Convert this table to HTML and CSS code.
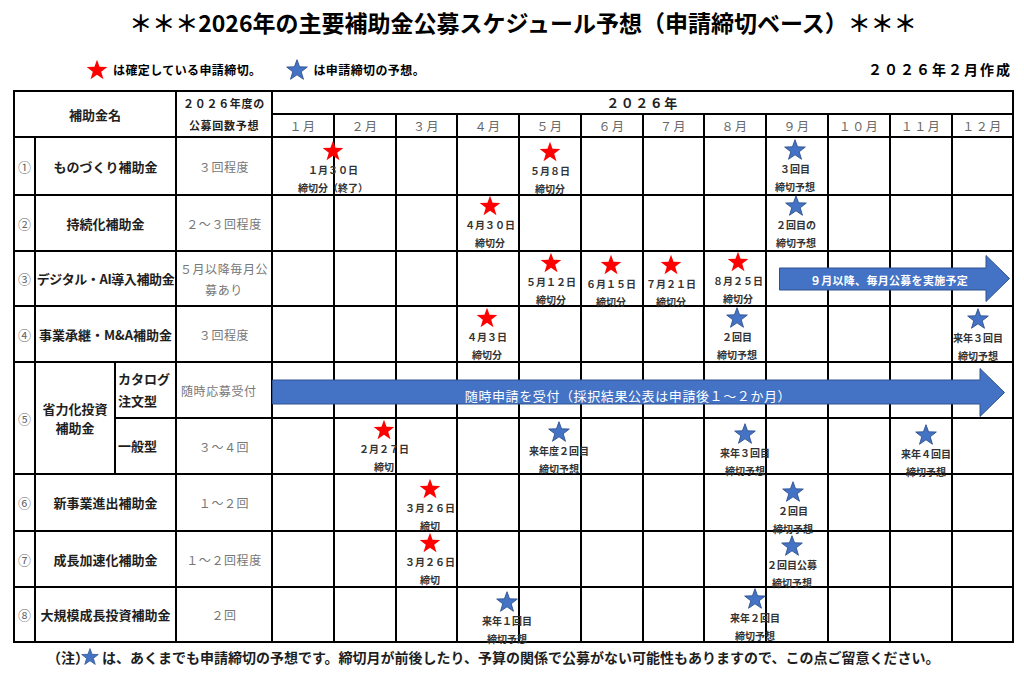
FILE: index.html
```html
<!DOCTYPE html>
<html lang="ja">
<head>
<meta charset="utf-8">
<title>2026年の主要補助金公募スケジュール予想</title>
<link rel="stylesheet" href="styles.css">
</head>
<body>
<svg class="defs" aria-hidden="true"><symbol id="star" viewBox="0 0 24 23"><polygon points="12,0.8 14.8,8.6 23.3,8.8 16.6,14 19.1,22.2 12,17.3 4.9,22.2 7.4,14 0.7,8.8 9.2,8.6"/></symbol></svg>

<h1 class="title">＊＊＊2026年の主要補助金公募スケジュール予想（申請締切ベース）＊＊＊</h1>

<div class="legend">
  <svg class="lst red" viewBox="0 0 24 23"><use href="#star"/></svg>
  <span class="ltext">は確定している申請締切。</span>
  <svg class="lst blue second" viewBox="0 0 24 23"><use href="#star"/></svg>
  <span class="ltext">は申請締切の予想。</span>
  <span class="made">２０２６年２月作成</span>
</div>

<div class="board">
  <div class="table">
    <div class="c hname">補助金名</div>
    <div class="c hcount">２０２６年度の<br>公募回数予想</div>
    <div class="c hyear">２０２６年</div>
    <div class="c mon">１月</div><div class="c mon">２月</div><div class="c mon">３月</div><div class="c mon">４月</div><div class="c mon">５月</div><div class="c mon">６月</div><div class="c mon">７月</div><div class="c mon">８月</div><div class="c mon">９月</div><div class="c mon">１０月</div><div class="c mon">１１月</div><div class="c mon">１２月</div>

    <div class="c num">①</div><div class="c name">ものづくり補助金</div><div class="c cnt">３回程度</div>
    <div class="c"></div><div class="c"></div><div class="c"></div><div class="c"></div><div class="c"></div><div class="c"></div><div class="c"></div><div class="c"></div><div class="c"></div><div class="c"></div><div class="c"></div><div class="c"></div>

    <div class="c num">②</div><div class="c name">持続化補助金</div><div class="c cnt">２～３回程度</div>
    <div class="c"></div><div class="c"></div><div class="c"></div><div class="c"></div><div class="c"></div><div class="c"></div><div class="c"></div><div class="c"></div><div class="c"></div><div class="c"></div><div class="c"></div><div class="c"></div>

    <div class="c num">③</div><div class="c name tight">デジタル・AI導入補助金</div><div class="c cnt two">５月以降毎月公<br>募あり</div>
    <div class="c"></div><div class="c"></div><div class="c"></div><div class="c"></div><div class="c"></div><div class="c"></div><div class="c"></div><div class="c"></div><div class="c"></div><div class="c"></div><div class="c"></div><div class="c"></div>

    <div class="c num">④</div><div class="c name">事業承継・M&amp;A補助金</div><div class="c cnt">３回程度</div>
    <div class="c"></div><div class="c"></div><div class="c"></div><div class="c"></div><div class="c"></div><div class="c"></div><div class="c"></div><div class="c"></div><div class="c"></div><div class="c"></div><div class="c"></div><div class="c"></div>

    <div class="c num span2">⑤</div><div class="c name grp span2">省力化投資<br>補助金</div><div class="c sub">カタログ<br>注文型</div><div class="c cnt left">随時応募受付</div>
    <div class="c"></div><div class="c"></div><div class="c"></div><div class="c"></div><div class="c"></div><div class="c"></div><div class="c"></div><div class="c"></div><div class="c"></div><div class="c"></div><div class="c"></div><div class="c"></div>
    <div class="c sub">一般型</div><div class="c cnt">３～４回</div>
    <div class="c"></div><div class="c"></div><div class="c"></div><div class="c"></div><div class="c"></div><div class="c"></div><div class="c"></div><div class="c"></div><div class="c"></div><div class="c"></div><div class="c"></div><div class="c"></div>

    <div class="c num">⑥</div><div class="c name">新事業進出補助金</div><div class="c cnt">１～２回</div>
    <div class="c"></div><div class="c"></div><div class="c"></div><div class="c"></div><div class="c"></div><div class="c"></div><div class="c"></div><div class="c"></div><div class="c"></div><div class="c"></div><div class="c"></div><div class="c"></div>

    <div class="c num">⑦</div><div class="c name">成長加速化補助金</div><div class="c cnt">１～２回程度</div>
    <div class="c"></div><div class="c"></div><div class="c"></div><div class="c"></div><div class="c"></div><div class="c"></div><div class="c"></div><div class="c"></div><div class="c"></div><div class="c"></div><div class="c"></div><div class="c"></div>

    <div class="c num">⑧</div><div class="c name">大規模成長投資補助金</div><div class="c cnt">２回</div>
    <div class="c"></div><div class="c"></div><div class="c"></div><div class="c"></div><div class="c"></div><div class="c"></div><div class="c"></div><div class="c"></div><div class="c"></div><div class="c"></div><div class="c"></div><div class="c"></div>
  </div>

  <div class="arrow a1">
    <svg class="ashape" viewBox="0 0 231 47"><polygon points="0.5,13 207,13 207,0.5 230.5,23.5 207,46.5 207,35 0.5,35"/></svg>
    <span class="atext">９月以降、毎月公募を実施予定</span>
  </div>
  <div class="arrow a2">
    <svg class="ashape" viewBox="0 0 733 49"><polygon points="0.5,12 708,12 708,0.5 732.5,24.5 708,48.5 708,36 0.5,36"/></svg>
    <span class="atext">随時申請を受付（採択結果公表は申請後１～２か月）</span>
  </div>

  <div class="mk" style="left:320px;top:50px"><svg class="st red" viewBox="0 0 24 23"><use href="#star"/></svg><span>１月３０日</span><span>締切分（終了）</span></div>
  <div class="mk" style="left:537px;top:51px"><svg class="st red" viewBox="0 0 24 23"><use href="#star"/></svg><span>５月８日</span><span>締切分</span></div>
  <div class="mk" style="left:782px;top:49px"><svg class="st blue" viewBox="0 0 24 23"><use href="#star"/></svg><span>３回目</span><span>締切予想</span></div>

  <div class="mk" style="left:477px;top:105px"><svg class="st red" viewBox="0 0 24 23"><use href="#star"/></svg><span>４月３０日</span><span>締切分</span></div>
  <div class="mk" style="left:783px;top:105px"><svg class="st blue" viewBox="0 0 24 23"><use href="#star"/></svg><span>２回目の</span><span>締切予想</span></div>

  <div class="mk" style="left:538px;top:162px"><svg class="st red" viewBox="0 0 24 23"><use href="#star"/></svg><span>５月１２日</span><span>締切分</span></div>
  <div class="mk" style="left:598px;top:164px"><svg class="st red" viewBox="0 0 24 23"><use href="#star"/></svg><span>６月１５日</span><span>締切分</span></div>
  <div class="mk" style="left:658px;top:164px"><svg class="st red" viewBox="0 0 24 23"><use href="#star"/></svg><span>７月２１日</span><span>締切分</span></div>
  <div class="mk" style="left:725px;top:161px"><svg class="st red" viewBox="0 0 24 23"><use href="#star"/></svg><span>８月２５日</span><span>締切分</span></div>

  <div class="mk" style="left:474px;top:217px"><svg class="st red" viewBox="0 0 24 23"><use href="#star"/></svg><span>４月３日</span><span>締切分</span></div>
  <div class="mk" style="left:724px;top:217px"><svg class="st blue" viewBox="0 0 24 23"><use href="#star"/></svg><span>２回目</span><span>締切予想</span></div>
  <div class="mk" style="left:965px;top:218px"><svg class="st blue" viewBox="0 0 24 23"><use href="#star"/></svg><span>来年３回目</span><span>締切予想</span></div>

  <div class="mk" style="left:371px;top:329px"><svg class="st red" viewBox="0 0 24 23"><use href="#star"/></svg><span>２月２７日</span><span>締切</span></div>
  <div class="mk" style="left:546px;top:331px"><svg class="st blue" viewBox="0 0 24 23"><use href="#star"/></svg><span>来年度２回目</span><span>締切予想</span></div>
  <div class="mk" style="left:732px;top:333px"><svg class="st blue" viewBox="0 0 24 23"><use href="#star"/></svg><span>来年３回目</span><span>締切予想</span></div>
  <div class="mk" style="left:913px;top:334px"><svg class="st blue" viewBox="0 0 24 23"><use href="#star"/></svg><span>来年４回目</span><span>締切予想</span></div>

  <div class="mk" style="left:417px;top:388px"><svg class="st red" viewBox="0 0 24 23"><use href="#star"/></svg><span>３月２６日</span><span>締切</span></div>
  <div class="mk" style="left:780px;top:391px"><svg class="st blue" viewBox="0 0 24 23"><use href="#star"/></svg><span>２回目</span><span>締切予想</span></div>

  <div class="mk" style="left:417px;top:442px"><svg class="st red" viewBox="0 0 24 23"><use href="#star"/></svg><span>３月２６日</span><span>締切</span></div>
  <div class="mk" style="left:779px;top:445px"><svg class="st blue" viewBox="0 0 24 23"><use href="#star"/></svg><span>２回目公募</span><span>締切予想</span></div>

  <div class="mk" style="left:494px;top:501px"><svg class="st blue" viewBox="0 0 24 23"><use href="#star"/></svg><span>来年１回目</span><span>締切予想</span></div>
  <div class="mk" style="left:742px;top:498px"><svg class="st blue" viewBox="0 0 24 23"><use href="#star"/></svg><span>来年２回目</span><span>締切予想</span></div>
</div>

<p class="note">（注）<svg class="nst blue" viewBox="0 0 24 23"><use href="#star"/></svg>は、あくまでも申請締切の予想です。締切月が前後したり、予算の関係で公募がない可能性もありますので、この点ご留意ください。</p>
</body>
</html>
```

FILE: styles.css
```css
html, body {
  margin: 0;
  padding: 0;
  background: #fff;
}
body {
  width: 1024px;
  font-family: "Noto Sans CJK JP", "Noto Sans", sans-serif;
  color: #000;
}
.defs {
  position: absolute;
  width: 0;
  height: 0;
  overflow: hidden;
}
.red { fill: #ff0000; }
.blue { fill: #4472c4; stroke: #2f528f; stroke-width: 1; }

.title {
  margin: 7px 0 0;
  padding-left: 22px;
  height: 30px;
  line-height: 30px;
  font-size: 23px;
  font-weight: 700;
  text-align: center;
  white-space: nowrap;
}

.legend {
  display: flex;
  align-items: center;
  height: 22px;
  margin-top: 21px;
  padding: 0 12px 0 86px;
  font-size: 12px;
  font-weight: 700;
  white-space: nowrap;
}
.lst { width: 22px; height: 21px; flex: none; }
.ltext { margin-left: 5px; letter-spacing: 0.4px; }
.lst.second { margin-left: 25px; }
.made {
  margin-left: auto;
  font-size: 14px;
  letter-spacing: 2px;
}

.board {
  position: relative;
  margin: 10px 0 0 13px;
  width: 1001px;
}
.table {
  display: grid;
  grid-template-columns: 19px 78px 59px 94px 60px 60px 59px 60px 60px 60px 59px 60px 60px 60px 60px 59px;
  grid-template-rows: 21px 21px 56px 54px 53px 54px 54px 54px 55px 54px 53px;
  gap: 2px;
  padding: 2px;
  background: #000;
}
.c {
  background: #fff;
  display: flex;
  align-items: center;
  justify-content: center;
  text-align: center;
  white-space: nowrap;
}
.hname {
  grid-column: 1 / span 3;
  grid-row: 1 / span 2;
  font-size: 13px;
  font-weight: 700;
  color: #222;
}
.hcount {
  grid-column: 4;
  grid-row: 1 / span 2;
  font-size: 11px;
  font-weight: 700;
  line-height: 22px;
  letter-spacing: 0.7px;
  color: #222;
}
.hyear {
  grid-column: 5 / span 12;
  font-size: 13px;
  font-weight: 700;
  letter-spacing: 1.5px;
  color: #222;
}
.mon {
  font-size: 12px;
  color: #666;
  letter-spacing: 1.5px;
}
.num {
  font-size: 13px;
  color: #666;
}
.name {
  grid-column: span 2;
  font-size: 13px;
  font-weight: 700;
  color: #1e1e1e;
}
.name.tight { letter-spacing: -0.4px; }
.name.grp {
  grid-column: span 1;
  line-height: 19px;
}
.span2 { grid-row: span 2; }
.sub {
  justify-content: flex-start;
  text-align: left;
  padding-left: 2px;
  font-size: 13px;
  font-weight: 700;
  line-height: 22px;
  color: #1e1e1e;
}
.cnt {
  font-size: 12px;
  color: #777;
  letter-spacing: 0.6px;
}
.cnt.two { line-height: 21px; }
.cnt.left {
  justify-content: flex-start;
  padding-left: 4px;
}

.arrow {
  position: absolute;
  display: flex;
  align-items: center;
}
.a1 { left: 766px; top: 165px; width: 231px; height: 47px; }
.a2 { left: 259px; top: 278px; width: 733px; height: 49px; }
.ashape {
  position: absolute;
  left: 0;
  top: 0;
  width: 100%;
  height: 100%;
  fill: #4472c4;
  stroke: #2f528f;
  stroke-width: 1;
}
.atext {
  position: relative;
  color: #fff;
  white-space: nowrap;
  text-align: center;
}
.a1 .atext {
  width: 220px;
  font-size: 11px;
  font-weight: 700;
  letter-spacing: 0.3px;
  padding-top: 3px;
}
.a2 .atext {
  width: 712px;
  font-size: 13px;
  letter-spacing: 0.6px;
  padding-top: 5px;
}

.mk {
  position: absolute;
  width: 0;
  display: flex;
  flex-direction: column;
  align-items: center;
  font-size: 10px;
  font-weight: 700;
  line-height: 18px;
  color: #333;
}
.mk span { white-space: nowrap; }
.st { width: 22px; height: 21px; flex: none; display: block; }

.note {
  margin: 0;
  padding-left: 47px;
  font-size: 14px;
  font-weight: 700;
  line-height: 28px;
  white-space: nowrap;
  color: #1e1e1e;
}
.nst {
  width: 18px;
  height: 17px;
  vertical-align: -2px;
  margin: 0 3px 0 -8px;
}
```
